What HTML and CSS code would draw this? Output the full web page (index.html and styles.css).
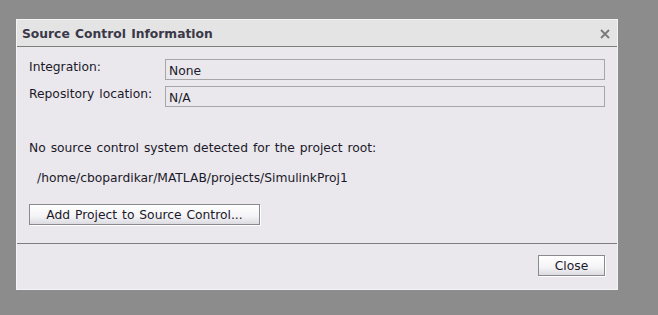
FILE: index.html
```html
<!DOCTYPE html>
<html>
<head>
<meta charset="utf-8">
<link rel="stylesheet" href="styles.css">
</head>
<body>
<div class="dialog">
  <div class="titlebar">
    <span class="title">Source Control Information</span>
    <svg class="close-x" width="10" height="10" viewBox="0 0 10 10"><path d="M1 1 L9 9 M9 1 L1 9" stroke="#7a7a7a" stroke-width="1.8"/></svg>
  </div>
  <div class="content">
    <div class="row">
      <span class="label">Integration:</span>
      <div class="field">None</div>
    </div>
    <div class="row row2">
      <span class="label">Repository location:</span>
      <div class="field">N/A</div>
    </div>
    <p class="msg">No source control system detected for the project root:</p>
    <p class="path">/home/cbopardikar/MATLAB/projects/SimulinkProj1</p>
    <button class="btn add">Add Project to Source Control...</button>
  </div>
  <div class="footer">
    <button class="btn close">Close</button>
  </div>
</div>
</body>
</html>
```
FILE: styles.css
```css
html, body {
  margin: 0;
  padding: 0;
  background: #8c8c8c;
  height: 100%;
}
body {
  padding-top: 19px;
  padding-left: 16px;
  box-sizing: border-box;
  font-family: "DejaVu Sans", sans-serif;
  font-size: 12.3px;
  word-spacing: 1px;
  color: #1c1a2a;
}
.dialog {
  width: 602px;
  height: 271px;
  box-sizing: border-box;
  border: 1px solid #f4f4f6;
  background: #eae8ed;
  display: flex;
  flex-direction: column;
}
.titlebar {
  height: 26px;
  background: #e4e4e4;
  border-bottom: 1px solid #7e7e7e;
  display: flex;
  align-items: center;
  justify-content: space-between;
  padding: 0 7px 0 5px;
  flex-shrink: 0;
}
.title {
  font-weight: bold;
  font-size: 12.3px;
  color: #3a3848;
  padding-top: 1px;
}
.close-x {
  margin-top: 1px;
}
.content {
  flex: 1;
  padding: 12px 12px 0 12px;
  border-bottom: 1px solid #7e7e7e;
}
.row {
  display: flex;
  align-items: flex-start;
}
.row2 {
  margin-top: 6px;
}
.label {
  width: 136px;
  flex-shrink: 0;
  line-height: 16px;
}
.field {
  flex: 1;
  height: 21px;
  box-sizing: border-box;
  border: 1px solid #a6a6a8;
  padding: 3px 3px 0 3px;
  line-height: 16px;
}
.msg {
  margin: 33px 0 0 0;
  line-height: 16px;
}
.path {
  margin: 14px 0 0 8px;
  line-height: 16px;
}
.btn {
  font-family: "DejaVu Sans", sans-serif;
  font-size: 12.3px;
  word-spacing: 1px;
  color: #1c1a2a;
  background: linear-gradient(#ffffff, #f4f3f6 60%, #dcdbe0);
  border: 1px solid #8a8a8e;
  box-shadow: 1px 1px 0 #ffffff;
  padding: 0;
  height: 21px;
}
.add {
  display: block;
  margin-top: 18px;
  width: 231px;
}
.footer {
  height: 45px;
  display: flex;
  justify-content: flex-end;
  align-items: flex-start;
  padding: 11px 12px 0 0;
  box-sizing: border-box;
  flex-shrink: 0;
}
.close {
  width: 67px;
}
```
